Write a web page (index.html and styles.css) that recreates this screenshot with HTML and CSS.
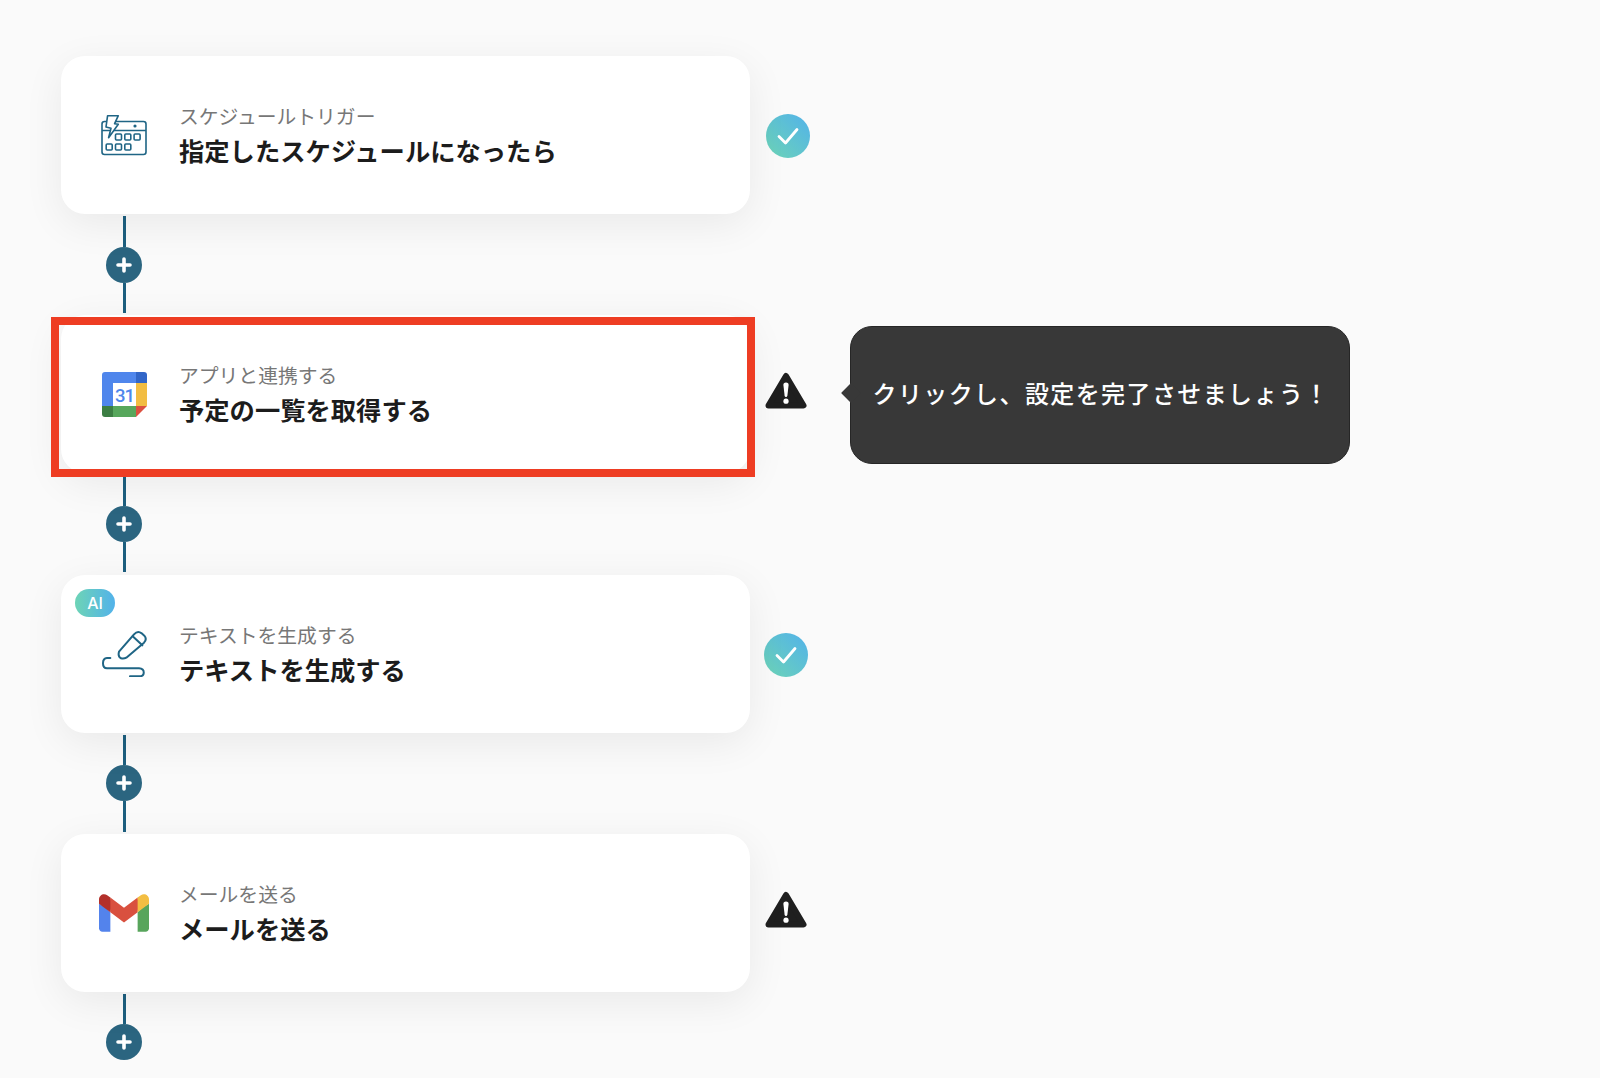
FILE: index.html
```html
<!DOCTYPE html>
<html lang="ja">
<head>
<meta charset="utf-8">
<title>フロー</title>
<link rel="stylesheet" href="styles.css">
</head>
<body>
<main class="flow">
  <section class="step">
    <div class="card">
      <div class="icon">
        <svg width="46" height="42" viewBox="0 0 46 42" fill="none" stroke="#1f6585" stroke-width="1.600" stroke-linejoin="round">
          <rect x="1" y="7.500" width="44" height="33" rx="2.500"/>
          <path d="M1 16.500H45"/>
          <circle cx="34" cy="12" r=".8" fill="#1f6585"/>
          <path fill="#fff" d="M6.600 1.700H17.300L13.600 9.700 17.300 10.300 7.600 23.700 10 14.300 5 13Z"/>
          <rect x="14.500" y="20" width="6" height="6" rx="1"/><rect x="23.800" y="20" width="6" height="6" rx="1"/><rect x="33.100" y="20" width="6" height="6" rx="1"/>
          <rect x="5.200" y="30" width="6" height="6" rx="1"/><rect x="14.500" y="30" width="6" height="6" rx="1"/><rect x="23.800" y="30" width="6" height="6" rx="1"/>
        </svg>
      </div>
      <div class="text">
        <p class="sub">スケジュールトリガー</p>
        <p class="title">指定したスケジュールになったら</p>
      </div>
    </div>
    <svg class="status status-first" width="44" height="44" viewBox="0 0 44 44">
      <defs><linearGradient id="g1" x1="0" y1="1" x2="1" y2="0"><stop offset="0" stop-color="#6dd4b6"/><stop offset="1" stop-color="#52b2ea"/></linearGradient></defs>
      <circle cx="22" cy="22" r="22" fill="url(#g1)"/>
      <path d="M13 22.500 19.500 29 31 15.500" fill="none" stroke="#fff" stroke-width="2.800" stroke-linecap="round" stroke-linejoin="round"/>
    </svg>
  </section>

  <div class="connector">
    <div class="line"></div>
    <div class="plus"><svg width="16" height="16" viewBox="0 0 16 16"><path d="M8 2V14M2 8H14" stroke="#fff" stroke-width="3.600" stroke-linecap="round"/></svg></div>
    <div class="line"></div>
  </div>

  <section class="step">
    <div class="card">
      <div class="icon">
        <svg width="45" height="45" viewBox="0 0 45 45">
          <path fill="#4f86ec" d="M3 0H34V11H11V34H0V3A3 3 0 0 1 3 0Z"/>
          <path fill="#3266c8" d="M34 0H42A3 3 0 0 1 45 3V11H34Z"/>
          <path fill="#f2bd42" d="M34 11H45V34H34Z"/>
          <path fill="#57a75c" d="M11 34H34V45H11Z"/>
          <path fill="#3c7e43" d="M0 34H11V45H3A3 3 0 0 1 0 42Z"/>
          <path fill="#dc5040" d="M34 34H45L34 45Z"/>
          <text class="cal-num" x="22.500" y="29.500" text-anchor="middle">31</text>
        </svg>
      </div>
      <div class="text">
        <p class="sub">アプリと連携する</p>
        <p class="title">予定の一覧を取得する</p>
      </div>
      <div class="highlight"></div>
    </div>
    <svg class="status status-warn" width="42" height="38" viewBox="0 0 42 38">
      <path d="M21 4 38.500 33.500H3.500Z" fill="#1f1f1f" stroke="#1f1f1f" stroke-width="6" stroke-linejoin="round"/>
      <path d="M18.400 13Q18.200 10.500 21 10.500 23.800 10.500 23.600 13L22.400 23.500Q22.200 25 21 25 19.800 25 19.600 23.500Z" fill="#fff"/>
      <circle cx="21" cy="29.200" r="2.600" fill="#fff"/>
    </svg>
    <div class="tooltip">クリックし、設定を完了させましょう！</div>
  </section>

  <div class="connector">
    <div class="line"></div>
    <div class="plus"><svg width="16" height="16" viewBox="0 0 16 16"><path d="M8 2V14M2 8H14" stroke="#fff" stroke-width="3.600" stroke-linecap="round"/></svg></div>
    <div class="line"></div>
  </div>

  <section class="step">
    <div class="card">
      <span class="badge">AI</span>
      <div class="icon">
        <svg width="46" height="46" viewBox="36 36 138 138" fill="none" stroke="#1f6585" stroke-width="6" stroke-linecap="round" stroke-linejoin="round">
          <path d="M90 98 135 46Q146 34 158 43L166 50Q175 60 165 71L112 116Q105 120 96 118 86 113 90 98Z"/>
          <path d="M131 52 160 79"/>
          <path d="M64 117H54C38 118 38 147 54 148H150C169 149 169 172 150 172H123"/>
        </svg>
      </div>
      <div class="text">
        <p class="sub">テキストを生成する</p>
        <p class="title">テキストを生成する</p>
      </div>
    </div>
    <svg class="status status-check" width="44" height="44" viewBox="0 0 44 44">
      <defs><linearGradient id="g2" x1="0" y1="1" x2="1" y2="0"><stop offset="0" stop-color="#6dd4b6"/><stop offset="1" stop-color="#52b2ea"/></linearGradient></defs>
      <circle cx="22" cy="22" r="22" fill="url(#g2)"/>
      <path d="M13 22.500 19.500 29 31 15.500" fill="none" stroke="#fff" stroke-width="2.800" stroke-linecap="round" stroke-linejoin="round"/>
    </svg>
  </section>

  <div class="connector">
    <div class="line"></div>
    <div class="plus"><svg width="16" height="16" viewBox="0 0 16 16"><path d="M8 2V14M2 8H14" stroke="#fff" stroke-width="3.600" stroke-linecap="round"/></svg></div>
    <div class="line"></div>
  </div>

  <section class="step">
    <div class="card">
      <div class="icon">
        <svg width="50" height="38" viewBox="0 0 256 193">
          <path fill="#5383ec" d="M58.182 192.050V93.140L27.507 65.077 0 49.504v125.091c0 9.658 7.825 17.455 17.455 17.455h40.727z"/>
          <path fill="#58a55c" d="M197.818 192.050h40.727c9.659 0 17.455-7.826 17.455-17.455V49.505l-31.156 17.837-27.026 25.798v98.910z"/>
          <path fill="#d9503f" d="M58.182 93.140l-4.174-38.647 4.174-36.989L128 69.868l69.818-52.364 4.669 34.992-4.669 40.644L128 145.504z"/>
          <path fill="#f3be42" d="M197.818 17.504V93.140L256 49.504V26.231c0-21.585-24.640-33.890-41.890-20.945l-16.292 12.218z"/>
          <path fill="#b3302a" d="M0 49.504l26.759 20.070L58.182 93.140V17.504L41.890 5.286C24.610-7.660 0 4.646 0 26.230v23.273z"/>
        </svg>
      </div>
      <div class="text">
        <p class="sub">メールを送る</p>
        <p class="title">メールを送る</p>
      </div>
    </div>
    <svg class="status status-warn" width="42" height="38" viewBox="0 0 42 38">
      <path d="M21 4 38.500 33.500H3.500Z" fill="#1f1f1f" stroke="#1f1f1f" stroke-width="6" stroke-linejoin="round"/>
      <path d="M18.400 13Q18.200 10.500 21 10.500 23.800 10.500 23.600 13L22.400 23.500Q22.200 25 21 25 19.800 25 19.600 23.500Z" fill="#fff"/>
      <circle cx="21" cy="29.200" r="2.600" fill="#fff"/>
    </svg>
  </section>

  <div class="connector connector-end">
    <div class="line"></div>
    <div class="plus"><svg width="16" height="16" viewBox="0 0 16 16"><path d="M8 2V14M2 8H14" stroke="#fff" stroke-width="3.600" stroke-linecap="round"/></svg></div>
  </div>
</main>
</body>
</html>
```
FILE: styles.css
```css
* { box-sizing: border-box; }
html, body { margin: 0; height: 1078px; overflow: hidden; }
body {
  background: #fafafa;
  font-family: "Noto Sans CJK JP", "Noto Sans", sans-serif;
}
.flow { padding: 56px 0 0 60.500px; }
.step { display: flex; align-items: center; height: 158px; }
.card {
  position: relative;
  width: 689.500px;
  height: 158px;
  flex: none;
  display: flex;
  align-items: center;
  gap: 32px;
  padding-left: 40.500px;
  background: #fff;
  border-radius: 24px;
  box-shadow: 0 10px 40px rgba(0, 0, 0, .07);
}
.icon { width: 46px; display: flex; justify-content: center; align-items: center; flex: none; }
.icon svg { flex: none; }
.text { display: flex; flex-direction: column; gap: 4px; margin-top: -2px; }
.sub { margin: 0; font-size: 19.800px; line-height: 28px; color: #777; }
.title { margin: 0; font-size: 25.300px; line-height: 32px; font-weight: 700; color: #1c1c1c; }
.cal-num { font-family: "Roboto", sans-serif; font-size: 18.500px; font-weight: 500; letter-spacing: -1px; fill: #4f86ec; }
.highlight {
  position: absolute;
  left: -9.500px;
  top: 1.500px;
  width: 704px;
  height: 160px;
  border: 8.500px solid #ee3d23;
}
.badge {
  position: absolute;
  left: 14.500px;
  top: 14px;
  width: 40px;
  height: 28px;
  border-radius: 14px;
  background: linear-gradient(90deg, #6dd4b6, #52b2ea);
  color: #fff;
  font-family: "Inter", sans-serif;
  font-size: 16px;
  font-weight: 500;
  line-height: 28px;
  text-align: center;
}
.status { margin-left: 14.500px; flex: none; }
.status-first { margin-left: 15.500px; margin-top: 2px; }
.status-check { margin-left: 14px; margin-top: 2px; }
.status-warn { margin-top: -7px; }
.connector {
  width: 36px;
  height: 101.400px;
  margin-left: 45.800px;
  padding: 2.300px 0 2.500px;
  display: flex;
  flex-direction: column;
  align-items: center;
}
.connector-end .line { flex: none; height: 30px; }
.line { flex: 1; width: 3px; background: #1d5f7f; }
.plus {
  width: 36px;
  height: 36px;
  flex: none;
  border-radius: 50%;
  background: #2b6580;
  display: flex;
  align-items: center;
  justify-content: center;
}
.plus svg { display: block; }
.tooltip {
  position: relative;
  width: 499.500px;
  height: 137.500px;
  margin-left: 43.500px;
  margin-top: 1px;
  padding: 0 0 5px 21.500px;
  display: flex;
  align-items: center;
  background: #383838;
  border: 1px solid #262626;
  border-radius: 22px;
  color: #fff;
  font-size: 24px;
  font-weight: 500;
  letter-spacing: 1.400px;
  white-space: nowrap;
}
.tooltip::before {
  content: "";
  position: absolute;
  left: -7px;
  top: 59px;
  width: 14px;
  height: 14px;
  background: #383838;
  transform: rotate(45deg);
}
```
